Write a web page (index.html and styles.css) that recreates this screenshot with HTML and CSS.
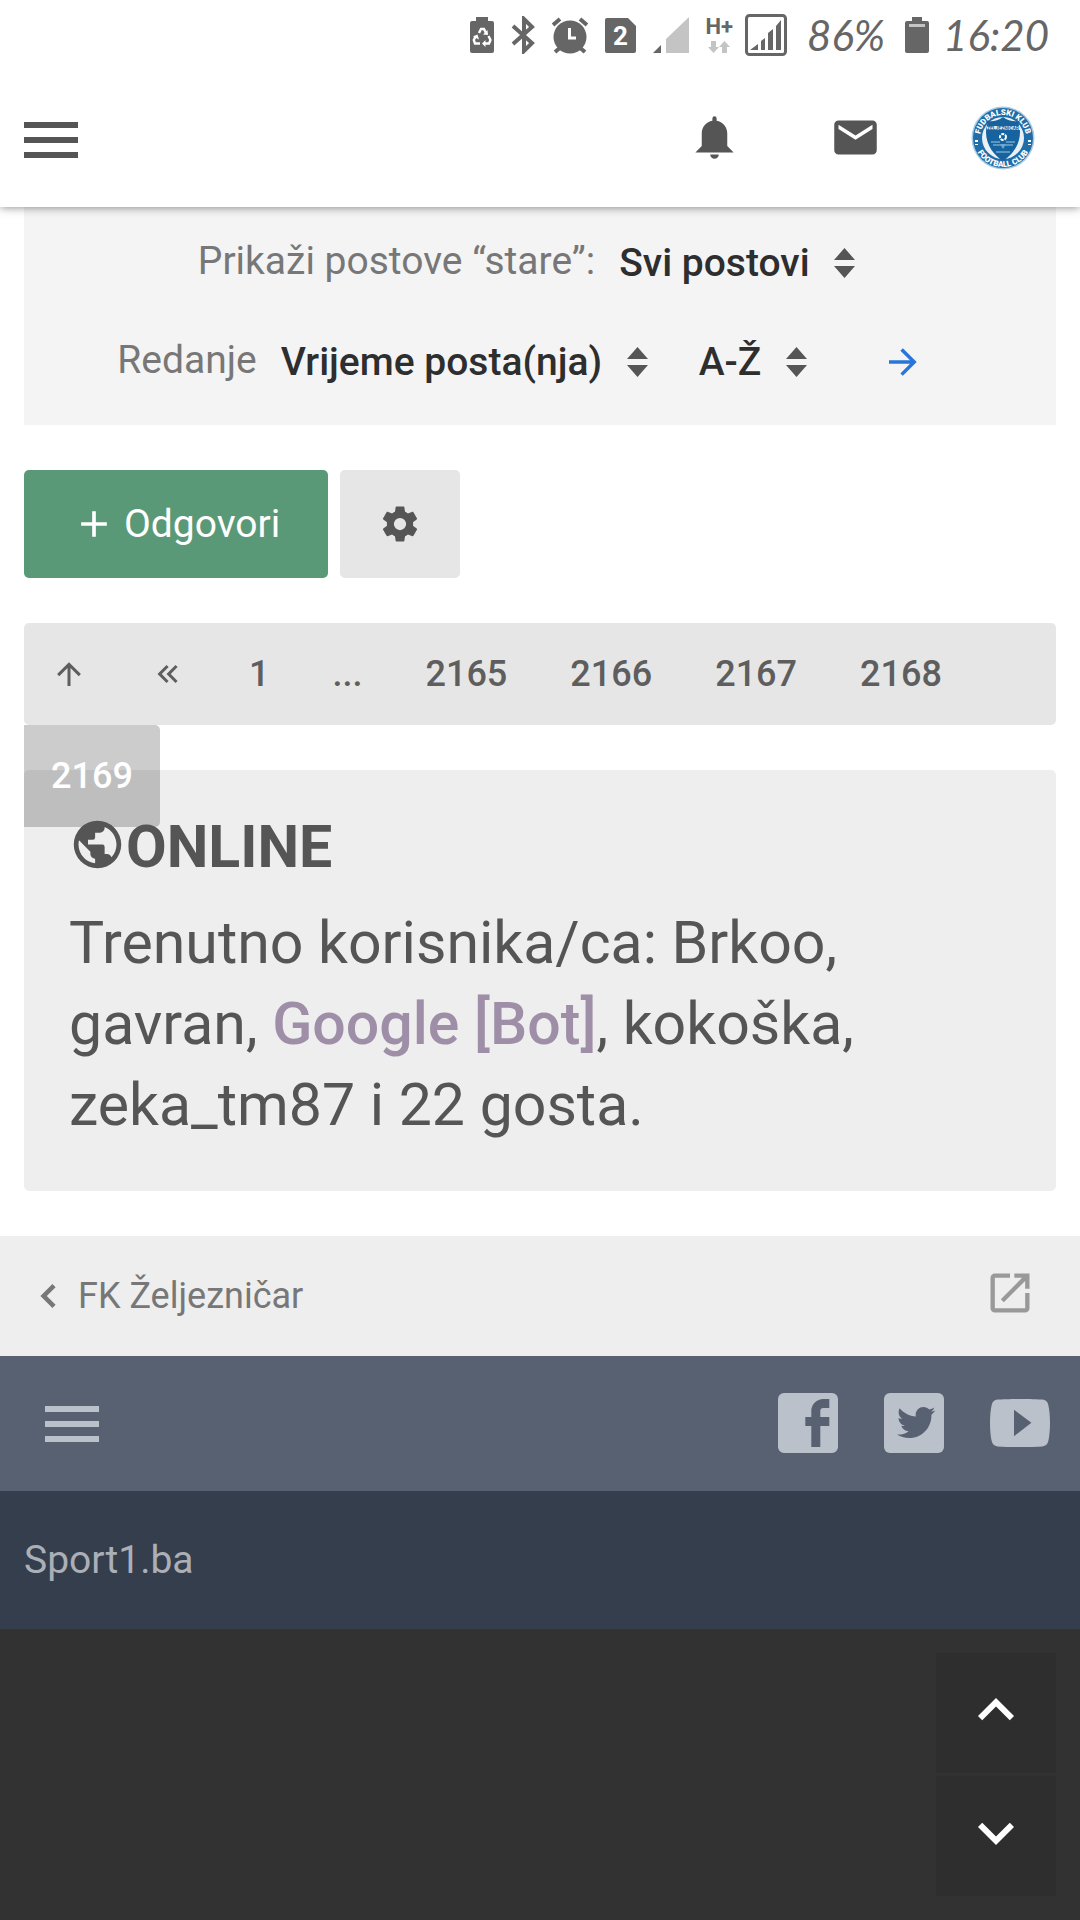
FILE: index.html
```html
<!DOCTYPE html>
<html lang="bs">
<head>
    <meta charset="UTF-8">
    <meta name="viewport" content="width=device-width, initial-scale=1.0">
    <title>FK Željezničar - Sport1.ba</title>
    <link rel="stylesheet" href="styles.css">
</head>
<body>

<div class="status-bar">
    <div class="status-group">
        <svg width="24" height="36" viewBox="0 0 24 36"><path fill="#666" d="M6 0h12v4h4a2 2 0 0 1 2 2v28a2 2 0 0 1-2 2H2a2 2 0 0 1-2-2V6a2 2 0 0 1 2-2h4z"/><g fill="none" stroke="#fff" stroke-width="2.4"><path d="M9 16l2-4h3l2 4M18.500 19l2 4-1.500 3.500h-5M10 26.500H5L3.800 23l2-4"/></g><path fill="#fff" d="M13 17.500l5 .5-.5-5zM15.500 23v7l-3.500-3.500zM3 19.500l4.500-2 1.500 5z"/></svg>
        <svg width="24" height="38" viewBox="0 0 24 38"><path fill="none" stroke="#666" stroke-width="4" d="M2 10l19 17-8 8V3l8 8L2 28"/></svg>
        <svg width="36" height="37" viewBox="0 0 36 37"><circle cx="18" cy="20" r="16.500" fill="#666"/><path stroke="#666" stroke-width="4" d="M1 8l7-6M35 8l-7-6M3 35l6-5M33 35l-6-5"/><path fill="none" stroke="#fff" stroke-width="3" d="M17.500 11v10H24"/></svg>
        <svg width="31" height="35" viewBox="0 0 31 35"><path fill="#666" d="M2 0h21l8 8v25a2 2 0 0 1-2 2H2a2 2 0 0 1-2-2V2a2 2 0 0 1 2-2z"/><text x="15.500" y="27" class="sim-number">2</text></svg>
        <svg width="36" height="36" viewBox="0 0 36 36"><path fill="#666" d="M0 36l8-8v8z"/><path fill="#c4c4c4" d="M13 36V22L36 0v36z"/></svg>
        <div class="network">
            <span>H+</span>
            <svg width="24" height="12" viewBox="0 0 24 12"><path fill="#c4c4c4" d="M4 0h5v6h3l-5.500 6L1 6h3zM15 12h5V6h3l-5.500-6L12 6h3z"/></svg>
        </div>
    </div>
    <div class="status-group tight">
        <svg width="42" height="42" viewBox="0 0 42 42"><rect x="1.500" y="1.500" width="39" height="39" rx="3" fill="none" stroke="#666" stroke-width="3"/><path fill="#666" d="M5 36l8-6v6zM16 36V27l4-3v12zM23 36V19l5-4v21zM31 36V12l5-6v30z"/></svg>
        <span class="status-text">86%</span>
        <svg width="24" height="36" viewBox="0 0 24 36"><path fill="#666" d="M7 0h10v4h5a2 2 0 0 1 2 2v28a2 2 0 0 1-2 2H2a2 2 0 0 1-2-2V6a2 2 0 0 1 2-2h5z"/><path fill="#c4c4c4" d="M4 7h16v3H4z"/></svg>
        <span class="status-text">16:20</span>
    </div>
</div>

<header class="header">
    <button class="menu-button" aria-label="Meni"><span></span><span></span><span></span></button>
    <nav class="header-links">
        <a href="#" aria-label="Obavijesti">
            <svg width="51" height="51" viewBox="0 0 24 24"><path fill="currentColor" d="M14 20a2 2 0 0 1-4 0h4M12 2a1 1 0 0 1 1 1v1.080c2.840.480 5 2.950 5 5.920v6l3 3H3l3-3v-6c0-2.970 2.160-5.440 5-5.920V3a1 1 0 0 1 1-1z"/></svg>
        </a>
        <a href="#" aria-label="Privatne poruke">
            <svg width="51" height="51" viewBox="0 0 24 24"><path fill="currentColor" d="M20 8l-8 5-8-5V6l8 5 8-5m0-2H4c-1.110 0-2 .890-2 2v12a2 2 0 0 0 2 2h16a2 2 0 0 0 2-2V6c0-1.110-.9-2-2-2z"/></svg>
        </a>
        <a href="#" aria-label="Profil">
            <svg width="64" height="64" viewBox="0 0 64 64">
                <defs>
                    <path id="arc-top" d="M9 32a23 23 0 0 1 46 0"/>
                    <path id="arc-bottom" d="M3 32a29 29 0 0 0 58 0"/>
                </defs>
                <circle cx="32" cy="32" r="31.500" fill="#a9cbe2"/>
                <circle cx="32" cy="32" r="30" fill="#1f6ea9"/>
                <circle cx="32" cy="32" r="21" fill="#e9f1f6"/>
                <path fill="#1763a0" d="M32 11c5 4 11 5 16 4-1 4 1 6 1 11 0 14-9 24-17 29-8-5-17-15-17-29 0-5 2-7 1-11 5 1 11 0 16-4z"/>
                <path fill="#dcebf5" d="M16 20h33v4H16z"/>
                <text x="32" y="24" class="crest-name">ŽELJEZNIČAR</text>
                <circle cx="32" cy="31" r="3" fill="none" stroke="#fff" stroke-width="2" stroke-dasharray="3 1"/>
                <path stroke="#6fa8d0" stroke-width="1.500" d="M20 36h9M35 36h9M22 39h8M34 39h8M25 46h14"/>
                <path fill="#6fa8d0" d="M29 38h6l-3 5z"/>
                <text class="crest-ring"><textPath href="#arc-top" startOffset="50%">FUDBALSKI KLUB</textPath></text>
                <text class="crest-ring"><textPath href="#arc-bottom" startOffset="50%">FOOTBALL CLUB</textPath></text>
                <path fill="#fff" d="M4 34h3v2H4zM4 38h3v1H4zM57 34h3v2h-3zM57 38h3v1h-3z"/>
            </svg>
        </a>
    </nav>
</header>

<main class="content">
    <form class="sort-panel">
        <div class="sort-row">
            <label for="stare">Prikaži postove “stare”:</label>
            <div class="select-box">
                <select id="stare"><option>Svi postovi</option></select>
                <svg width="21" height="30" viewBox="0 0 21 30"><path fill="#555" d="M0 12L10.500 0 21 12zM0 18h21L10.500 30z"/></svg>
            </div>
        </div>
        <div class="sort-row">
            <label for="redanje">Redanje</label>
            <div class="select-box">
                <select id="redanje"><option>Vrijeme posta(nja)</option></select>
                <svg width="21" height="30" viewBox="0 0 21 30"><path fill="#555" d="M0 12L10.500 0 21 12zM0 18h21L10.500 30z"/></svg>
            </div>
            <div class="select-box">
                <select aria-label="Smjer"><option>A-Ž</option></select>
                <svg width="21" height="30" viewBox="0 0 21 30"><path fill="#555" d="M0 12L10.500 0 21 12zM0 18h21L10.500 30z"/></svg>
            </div>
            <button type="submit" class="go-button" aria-label="Idi">
                <svg width="42" height="42" viewBox="0 0 24 24"><path fill="currentColor" d="M4 11v2h12l-5.500 5.500 1.420 1.420L19.840 12l-7.920-7.920L10.500 5.500 16 11H4z"/></svg>
            </button>
        </div>
    </form>

    <div class="actions">
        <button class="btn btn-reply">
            <svg width="44" height="44" viewBox="0 0 24 24"><path fill="currentColor" d="M19 13h-6v6h-2v-6H5v-2h6V5h2v6h6v2z"/></svg>
            Odgovori
        </button>
        <button class="btn btn-tools" aria-label="Alati teme">
            <svg width="42" height="42" viewBox="0 0 24 24"><path fill="currentColor" d="M12 15.500A3.500 3.500 0 0 1 8.500 12 3.500 3.500 0 0 1 12 8.500a3.500 3.500 0 0 1 3.500 3.500 3.500 3.500 0 0 1-3.500 3.500m7.430-2.530c.040-.320.070-.640.070-.970 0-.330-.030-.660-.070-1l2.110-1.630c.190-.150.240-.420.120-.640l-2-3.460c-.120-.220-.390-.310-.610-.220l-2.490 1c-.520-.390-1.060-.730-1.690-.980l-.370-2.650A.506.506 0 0 0 14 2h-4c-.250 0-.460.180-.5.420l-.370 2.650c-.630.250-1.170.590-1.690.980l-2.490-1c-.220-.090-.490 0-.610.220l-2 3.460c-.130.220-.070.490.120.640L4.570 11c-.040.340-.070.670-.070 1 0 .330.030.650.070.970l-2.110 1.660c-.190.150-.250.420-.120.640l2 3.460c.120.220.390.300.610.220l2.490-1.010c.520.400 1.060.740 1.690.990l.370 2.650c.040.240.250.420.5.420h4c.250 0 .460-.180.500-.420l.370-2.650c.630-.260 1.170-.590 1.690-.990l2.490 1.010c.220.080.490 0 .610-.220l2-3.460c.120-.220.070-.490-.120-.640l-2.110-1.660z"/></svg>
        </button>
    </div>

    <nav class="pagination" aria-label="Stranice">
        <a href="#" aria-label="Na vrh"><svg width="36" height="36" viewBox="0 0 24 24"><path fill="currentColor" d="M13 20h-2V8l-5.500 5.500-1.420-1.420L12 4.160l7.920 7.920-1.420 1.420L13 8v12z"/></svg></a>
        <a href="#" aria-label="Prethodna"><svg width="36" height="36" viewBox="0 0 24 24"><path fill="currentColor" d="M18.410 7.410L17 6l-6 6 6 6 1.410-1.410L13.830 12l4.580-4.590m-6 0L11 6l-6 6 6 6 1.410-1.410L7.830 12l4.580-4.590z"/></svg></a>
        <a href="#">1</a>
        <span>...</span>
        <a href="#">2165</a>
        <a href="#">2166</a>
        <a href="#">2167</a>
        <a href="#">2168</a>
        <span class="current">2169</span>
    </nav>

    <section class="online">
        <h2>
            <svg width="57" height="57" viewBox="0 0 24 24"><path fill="currentColor" d="M17.900 17.390c-.260-.800-1.010-1.390-1.900-1.390h-1v-3a1 1 0 0 0-1-1H8v-2h2a1 1 0 0 0 1-1V7h2a2 2 0 0 0 2-2v-.410c2.930 1.180 5 4.050 5 7.410 0 2.080-.8 3.970-2.100 5.390M11 19.930c-3.950-.490-7-3.850-7-7.930 0-.620.080-1.220.210-1.790L9 15v1a2 2 0 0 0 2 2m1-16A10 10 0 0 0 2 12a10 10 0 0 0 10 10 10 10 0 0 0 10-10A10 10 0 0 0 12 2z"/></svg>ONLINE
        </h2>
        <p>Trenutno korisnika/ca: Brkoo, gavran, <a href="#">Google [Bot]</a>, kokoška, zeka_tm87 i 22 gosta.</p>
    </section>
</main>

<footer>
    <div class="breadcrumbs">
        <a href="#">
            <svg width="48" height="48" viewBox="0 0 24 24"><path fill="currentColor" d="M15.800 16.400L11.400 12l4.400-4.400L14.200 6l-6 6 6 6z"/></svg>
            FK Željezničar
        </a>
        <a href="#" class="open-link" aria-label="Otvori u novom prozoru">
            <svg width="52" height="52" viewBox="0 0 24 24"><path fill="currentColor" d="M14 3v2h3.590l-9.830 9.830 1.410 1.410L19 6.410V10h2V3m-2 16H5V5h7V3H5c-1.110 0-2 .9-2 2v14a2 2 0 0 0 2 2h14a2 2 0 0 0 2-2v-7h-2v7z"/></svg>
        </a>
    </div>
    <div class="social-bar">
        <button class="menu-button" aria-label="Meni"><span></span><span></span><span></span></button>
        <div class="social-links">
            <a href="#" aria-label="Facebook">
                <svg width="60" height="60" viewBox="0 0 20 20"><path fill="currentColor" fill-rule="evenodd" d="M2 0h16a2 2 0 0 1 2 2v16a2 2 0 0 1-2 2H2a2 2 0 0 1-2-2V2a2 2 0 0 1 2-2zM17.100 2h-2a4 4 0 0 0-4 4v2h-2v3h2v7h3v-7h3V8h-3V6a1 1 0 0 1 1-1h2z"/></svg>
            </a>
            <a href="#" aria-label="Twitter">
                <svg width="60" height="60" viewBox="0 0 20 20"><rect width="20" height="20" rx="2" fill="currentColor"/><path fill="#586171" transform="translate(3.400 2.200) scale(.61)" d="M22.460 6c-.770.350-1.600.580-2.460.690.880-.530 1.560-1.370 1.880-2.380-.830.500-1.750.850-2.720 1.050C18.370 4.500 17.260 4 16 4c-2.350 0-4.270 1.920-4.270 4.290 0 .340.040.670.110.980C8.280 9.090 5.110 7.380 3 4.790c-.370.630-.580 1.370-.580 2.150 0 1.490.750 2.810 1.910 3.560-.710 0-1.370-.200-1.950-.500v.030c0 2.080 1.480 3.820 3.440 4.210-.360.100-.740.150-1.130.150-.270 0-.540-.030-.800-.080.540 1.690 2.110 2.950 4 2.980-1.460 1.160-3.310 1.840-5.330 1.840-.340 0-.680-.020-1.020-.060C3.440 20.290 5.700 21 8.120 21 16 21 20.330 14.460 20.330 8.790c0-.190 0-.370-.010-.560.840-.600 1.560-1.360 2.140-2.230z"/></svg>
            </a>
            <a href="#" aria-label="YouTube">
                <svg width="60" height="60" viewBox="0 0 20 20"><path fill="currentColor" fill-rule="evenodd" d="M10 2c3 0 6 .1 7.500.2 1 .1 1.600.6 1.900 1.600.8 3.200.8 9.200 0 12.400-.3 1-.9 1.500-1.900 1.600-4 .3-11 .3-15 0-1-.1-1.600-.6-1.900-1.600-.8-3.200-.8-9.200 0-12.400.3-1 .9-1.500 1.900-1.600C4 2.100 7 2 10 2zM8 5.600v8.800l5.800-4.500z"/></svg>
            </a>
        </div>
    </div>
    <div class="site-name"><a href="#">Sport1.ba</a></div>
</footer>

<div class="scroll-buttons">
    <button aria-label="Gore"><svg width="72" height="72" viewBox="0 0 24 24"><path fill="currentColor" d="M7.410 15.410L12 10.830l4.590 4.580L18 14l-6-6-6 6z"/></svg></button>
    <button aria-label="Dole"><svg width="72" height="72" viewBox="0 0 24 24"><path fill="currentColor" d="M7.410 8.580L12 13.170l4.590-4.590L18 10l-6 6-6-6z"/></svg></button>
</div>

</body>
</html>
```

FILE: styles.css
```css
* { box-sizing: border-box; }
body { margin: 0; background-color: #323232; color: #555; font-family: Roboto, "Noto Sans", sans-serif; font-size: 39px; }
a { color: inherit; text-decoration: none; }
button { padding: 0; border: none; background: none; color: inherit; font: inherit; cursor: pointer; }
svg { display: block; flex: none; }

.status-bar { display: flex; justify-content: flex-end; align-items: center; gap: 12px; height: 72px; padding: 0 31px 2px 0; background-color: white; color: #666; }
.status-group { display: flex; align-items: center; gap: 17px; }
.status-group.tight { gap: 14px; }
.status-text { min-width: 90px; font-family: Lato, sans-serif; font-size: 42px; font-style: italic; line-height: 48px; text-align: center; }
.sim-number { fill: white; font-size: 26px; font-weight: bold; text-anchor: middle; }
.network { display: flex; flex-direction: column; align-items: center; gap: 4px; font-size: 22px; font-weight: bold; line-height: 20px; }

.header { position: relative; z-index: 1; display: flex; justify-content: space-between; align-items: center; height: 135px; padding: 0 45px 0 24px; background-color: white; box-shadow: 0 0 9px rgba(0, 0, 0, 0.5); clip-path: inset(0 0 -12px 0); }
.header-links { display: flex; align-items: center; gap: 90px; padding-bottom: 4px; }
.menu-button { display: flex; flex-direction: column; gap: 9px; width: 54px; }
.menu-button span { height: 6px; background-color: currentColor; }
.crest-name { fill: #1763a0; font-size: 5px; font-weight: bold; text-anchor: middle; }
.crest-ring { fill: white; font-size: 8px; font-weight: 900; text-anchor: middle; }

.content { padding: 0 24px 45px; background-color: white; }

.sort-panel { padding: 6px 0 14px; background-color: #f4f4f4; }
.sort-row { display: flex; justify-content: center; align-items: center; gap: 9px; height: 99px; }
.sort-row label { padding-bottom: 4px; color: #777; }
.select-box { display: flex; align-items: center; gap: 24px; padding: 0 27px 0 15px; }
.select-box select { appearance: none; padding: 0; border: none; background: none; color: #2e2e2e; font: inherit; font-weight: 500; }
.go-button { padding: 0 39px; color: #2a75d9; }

.actions { display: flex; gap: 12px; margin: 45px 0; }
.btn { display: flex; justify-content: center; align-items: center; height: 108px; border-radius: 5px; }
.btn-reply { gap: 8px; padding: 0 48px; background-color: #5a9977; color: white; }
.btn-tools { width: 120px; background-color: #e6e6e6; }

/* fixed height, the last page drops below the bar */
.pagination { display: flex; flex-wrap: wrap; align-content: flex-start; column-gap: 9px; height: 102px; margin-bottom: 45px; border-radius: 5px; background-color: #e6e6e6; color: #5e5e5e; font-size: 36px; font-weight: 500; line-height: 102px; }
.pagination a, .pagination span { display: flex; align-items: center; height: 102px; padding: 0 27px; }
.pagination .current { border-radius: 0 5px 5px 0; background-color: rgba(0, 0, 0, 0.2); color: white; }

.online { padding: 36px 45px 46px; border-radius: 5px; background-color: #eee; font-size: 59px; line-height: 81px; }
.online h2 { display: flex; align-items: center; margin: 0 0 15px; font-size: 59px; font-weight: bold; }
.online h2 svg { margin-bottom: 4px; }
.online p { margin: 0; }
.online p a { color: #9e8ea7; font-weight: 500; }

.breadcrumbs { display: flex; justify-content: space-between; align-items: center; height: 120px; padding: 0 44px 0 24px; background-color: #eee; color: #777; font-size: 36px; }
.breadcrumbs a { display: flex; align-items: center; gap: 6px; }
.breadcrumbs .open-link { padding-bottom: 6px; color: #999; }
.social-bar { display: flex; justify-content: space-between; align-items: center; height: 135px; padding: 0 30px 0 45px; background-color: #586171; color: #bbc1ca; }
.social-links { display: flex; gap: 46px; padding-bottom: 2px; }
.site-name { padding: 46px 24px; background-color: #353e4c; color: #abafb7; line-height: 46px; }

.scroll-buttons { position: fixed; right: 24px; bottom: 24px; display: flex; flex-direction: column; gap: 3px; }
.scroll-buttons button { display: flex; justify-content: center; align-items: center; width: 120px; height: 120px; padding-bottom: 6px; background-color: #2e2e2e; color: white; }
```
